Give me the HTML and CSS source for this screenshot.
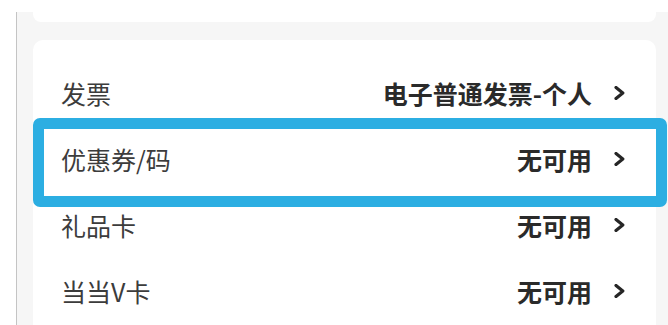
FILE: index.html
```html
<!DOCTYPE html>
<html lang="zh-CN">
<head>
<meta charset="utf-8">
<title>结算</title>
<link rel="stylesheet" href="styles.css">
</head>
<body>
<div class="page">
  <div class="prev-card"></div>
  <div class="card">
    <div class="row">
      <span class="label">发票</span>
      <span class="value">电子普通发票-个人</span>
      <svg class="chev" viewBox="0 0 11 14" width="11" height="14"><polyline points="2,1.5 8.8,7 2,12.5"/></svg>
    </div>
    <div class="row">
      <span class="label">优惠券/码</span>
      <span class="value">无可用</span>
      <svg class="chev" viewBox="0 0 11 14" width="11" height="14"><polyline points="2,1.5 8.8,7 2,12.5"/></svg>
      <div class="highlight"></div>
    </div>
    <div class="row">
      <span class="label">礼品卡</span>
      <span class="value">无可用</span>
      <svg class="chev" viewBox="0 0 11 14" width="11" height="14"><polyline points="2,1.5 8.8,7 2,12.5"/></svg>
    </div>
    <div class="row">
      <span class="label">当当V卡</span>
      <span class="value">无可用</span>
      <svg class="chev" viewBox="0 0 11 14" width="11" height="14"><polyline points="2,1.5 8.8,7 2,12.5"/></svg>
    </div>
  </div>
</div>
</body>
</html>
```
FILE: styles.css
```css
html, body {
  margin: 0;
  padding: 0;
  background: #ffffff;
  overflow: hidden;
}
body {
  font-family: "Noto Sans CJK SC", "Noto Sans", sans-serif;
  width: 668px;
  height: 325px;
}
.page {
  display: flex;
  flex-direction: column;
  margin: 12px 0 0 16px;
  height: 313px;
  border-left: 1px solid #c4c4c4;
  background: #f6f6f6;
  padding: 0 12px 0 16px;
  box-sizing: border-box;
}
.prev-card {
  height: 10px;
  flex: none;
  background: #ffffff;
  border-radius: 0 0 8px 8px;
}
.card {
  flex: 1;
  margin-top: 18px;
  background: #ffffff;
  border-radius: 10px 10px 0 0;
  padding: 20px 31px 0 28px;
}
.row {
  position: relative;
  display: flex;
  align-items: center;
  height: 66px;
  font-size: 25px;
}
.label {
  flex: 1;
  color: #3c3c3c;
  font-weight: 400;
}
.value {
  color: #2a2a2a;
  font-weight: 700;
  margin-right: 22px;
}
.chev {
  fill: none;
  stroke: #262626;
  stroke-width: 3.2;
  stroke-linecap: round;
  stroke-linejoin: round;
}
.highlight {
  position: absolute;
  top: -8px;
  left: -28px;
  right: -42px;
  height: 89px;
  border: 11px solid #2caee2;
  border-radius: 7px;
  box-sizing: border-box;
}
```
